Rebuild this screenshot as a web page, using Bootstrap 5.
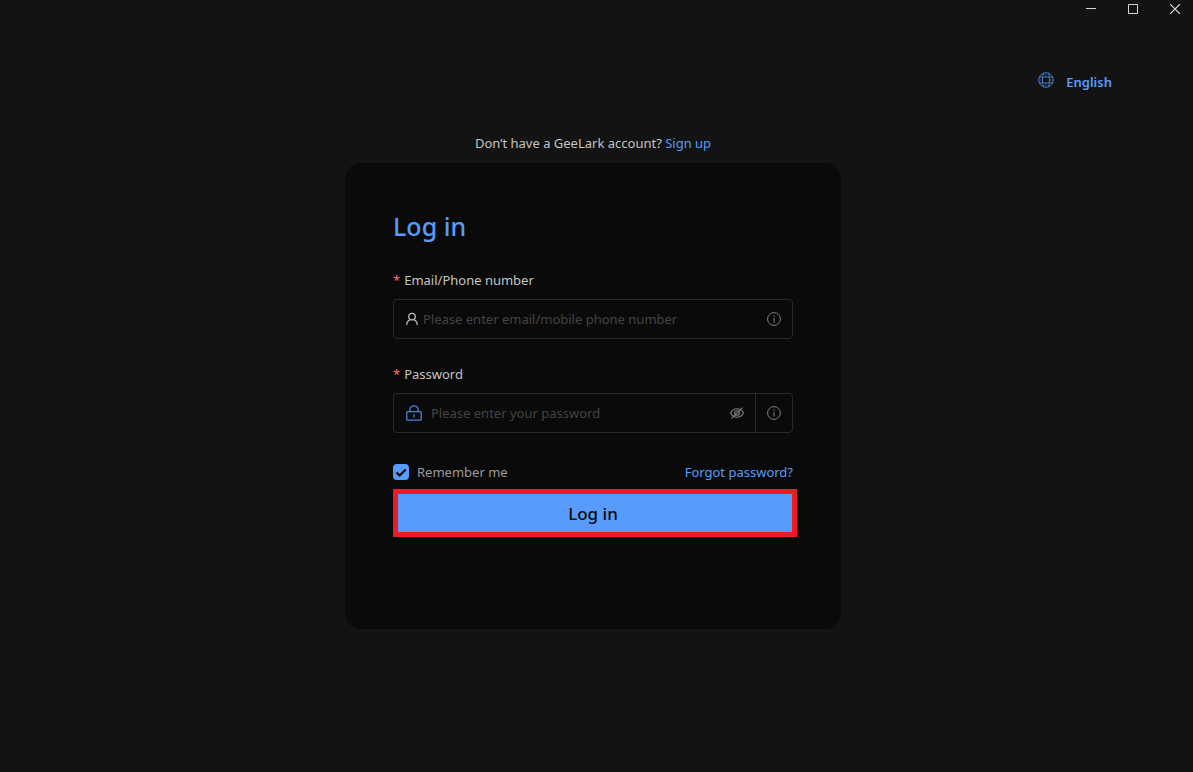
<!DOCTYPE html>
<html lang="en" data-bs-theme="dark">
<head>
<meta charset="utf-8">
<meta name="viewport" content="width=device-width, initial-scale=1">
<title>GeeLark - Log in</title>
<link href="https://cdn.jsdelivr.net/npm/bootstrap@5.3.0/dist/css/bootstrap.min.css" rel="stylesheet">
<style>
  :root { --brand: #589cfb; --line: #282828; }
  body { background: #131313; color: #c4c4c4; font-family: "Noto Sans", "Open Sans", sans-serif; font-size: 13px; line-height: 20px; }
  svg { display: block; fill: none; flex: none; }
  a { color: var(--brand); text-decoration: none; }
  .plain-btn { background: none; border: 0; padding: 0; color: inherit; }
  .window-bar { gap: 31px; padding: 0 12px; height: 18px; color: #d6d6d6; }
  .lang-bar { padding: 54px 81px 0; height: 115px; }
  .lang-btn { color: var(--brand); font-weight: 600; gap: 12px; }
  .login-area { max-width: 496px; width: 100%; }
  .login-wrap { padding-right: 7px; }
  .login-card { background: #0a0a0a; border: 0; border-radius: 16px; padding: 48px 48px 92px; margin-top: 10px; }
  .login-title { color: var(--brand); font-size: 25px; line-height: 30px; font-weight: 500; margin: 0 0 29px; }
  .field-label { line-height: 20px; margin-bottom: 9px; display: block; }
  .field-label.needed::before { content: "*"; color: #ff7070; margin-right: 4px; }
  .field-box { border: 1px solid var(--line); border-radius: 4px; height: 40px; margin-bottom: 25px; }
  .field-box .form-control { border: 0; background: none; box-shadow: none; padding: 0; font-size: 13px; line-height: 20px; color: #c4c4c4; min-width: 0; }
  .field-box .form-control::placeholder { color: #444; opacity: 1; }
  .field-user { padding: 0 11px 0 12px; gap: 4px; }
  .field-pass { padding-left: 12px; margin-bottom: 29px; }
  .pass-icon { margin-right: 9px; }
  .tip-cell { border-left: 1px solid var(--line); flex: 0 0 37px; }
  .icon-grey { color: #808080; }
  .form-check-input.remember { width: 16px; height: 16px; margin: 0 8px 0 0; border: 0; border-radius: 4px; background-color: #2a2a2a; }
  .form-check-input.remember:checked { background-color: var(--brand); background-size: 16px; background-image: url("data:image/svg+xml,%3csvg xmlns='http://www.w3.org/2000/svg' viewBox='0 0 16 16'%3e%3cpath fill='none' stroke='%230a0a0a' stroke-width='2.2' d='M3.5 8.5l3.2 3 6-6'/%3e%3c/svg%3e"); }
  .remember-label { color: #9a9a9a; }
  .login-btn { background: var(--brand); color: #0a0a0a; border: 5px solid #ed1c24; border-radius: 0; height: 48px; margin: 7px -4px 0 0; padding: 2px 4px 0 0; font-size: 17px; line-height: 24px; font-weight: 500; }
  .login-btn:hover { background: #79b0fa; color: #0a0a0a; border-color: #ed1c24; }
</style>
</head>
<body>
<header>
  <div class="window-bar d-flex align-items-center justify-content-end">
    <button class="plain-btn" type="button" aria-label="Minimize"><svg width="11" height="10" viewBox="0 0 11 10"><path d="M0 4.5h10" stroke="currentColor"/></svg></button>
    <button class="plain-btn" type="button" aria-label="Maximize"><svg width="11" height="10" viewBox="0 0 11 10"><path d="M.5.5h9v9h-9z" stroke="currentColor"/></svg></button>
    <button class="plain-btn" type="button" aria-label="Close"><svg width="11" height="10" viewBox="0 0 11 10"><path d="M0 0l10 10M10 0L0 10" stroke="currentColor" stroke-width="1.2"/></svg></button>
  </div>
  <div class="lang-bar d-flex justify-content-end align-items-start">
    <button class="plain-btn lang-btn d-flex align-items-center" type="button">
      <svg class="mb-1" width="16" height="16" viewBox="0 0 16 16" stroke="#477bc3"><circle cx="8" cy="8" r="7.3"/><path d="M5.5 1.2C4.2 5 4.2 11 5.5 14.8M10.5 1.2C11.8 5 11.8 11 10.5 14.8M1.2 5.5C5 4.7 11 4.7 14.800 5.5M1.2 10.5C5 11.3 11 11.3 14.800 10.5"/><path d="M.7 8h3.800M11.5 8h3.800M8 .7v4M8 11.3v4" stroke-width=".6"/></svg>
      <span>English</span>
    </button>
  </div>
</header>
<main class="login-wrap d-flex justify-content-center">
  <div class="login-area">
    <div class="text-center">Don’t have a GeeLark account? <a href="#signup">Sign up</a></div>
    <form class="login-card card">
      <h1 class="login-title">Log in</h1>

      <label class="field-label needed" for="account">Email/Phone number</label>
      <div class="field-box field-user d-flex align-items-center">
        <svg width="13" height="14" viewBox="0 0 13 14" stroke="#b8b8b8" stroke-width="1.3"><circle cx="6" cy="4.6" r="3.3"/><path d="M.7 13c.1-3 1.700-4.600 3.600-5.300M11.300 13c-.1-3-1.700-4.600-3.600-5.300"/></svg>
        <input class="form-control" id="account" type="text" placeholder="Please enter email/mobile phone number">
        <button class="plain-btn icon-grey" type="button" aria-label="Account help"><svg width="14" height="14" viewBox="0 0 14 14" stroke="currentColor"><circle cx="7" cy="7" r="6.4"/><path d="M7 6v4.5M7 3.5v1.3"/></svg></button>
      </div>

      <label class="field-label needed" for="password">Password</label>
      <div class="field-box field-pass d-flex align-items-center">
        <svg class="pass-icon" width="16" height="16" viewBox="0 0 16 16" stroke="#4a84d8" stroke-width="1.3"><rect x=".8" y="6.7" width="14.4" height="8.5" rx=".8"/><path d="M3.8 6.7V5a4.2 4.2 0 0 1 8.4 0v1.7M8 9.2v3.2"/></svg>
        <input class="form-control" id="password" type="password" placeholder="Please enter your password">
        <button class="plain-btn icon-grey px-2" type="button" aria-label="Show password"><svg width="20" height="14" viewBox="0 0 20 14" stroke="currentColor" stroke-width="1.1"><path d="M3.5 7C6.5 1.3 13.5 1.3 16.5 7 13.5 12.7 6.5 12.7 3.5 7z"/><circle cx="10" cy="7" r="2.3"/><path d="M4.5 12.4L15.5 1.6"/></svg></button>
        <div class="tip-cell align-self-stretch d-flex align-items-center justify-content-center"><button class="plain-btn icon-grey" type="button" aria-label="Password help"><svg width="14" height="14" viewBox="0 0 14 14" stroke="currentColor"><circle cx="7" cy="7" r="6.4"/><path d="M7 6v4.5M7 3.5v1.3"/></svg></button></div>
      </div>

      <div class="d-flex justify-content-between align-items-center">
        <div class="d-flex align-items-center">
          <input class="form-check-input remember" type="checkbox" id="remember" checked>
          <label class="remember-label" for="remember">Remember me</label>
        </div>
        <a href="#forgot">Forgot password?</a>
      </div>
      <button class="btn login-btn" type="submit">Log in</button>
    </form>
  </div>
</main>
<script src="https://cdn.jsdelivr.net/npm/bootstrap@5.3.0/dist/js/bootstrap.bundle.min.js"></script>
</body>
</html>
